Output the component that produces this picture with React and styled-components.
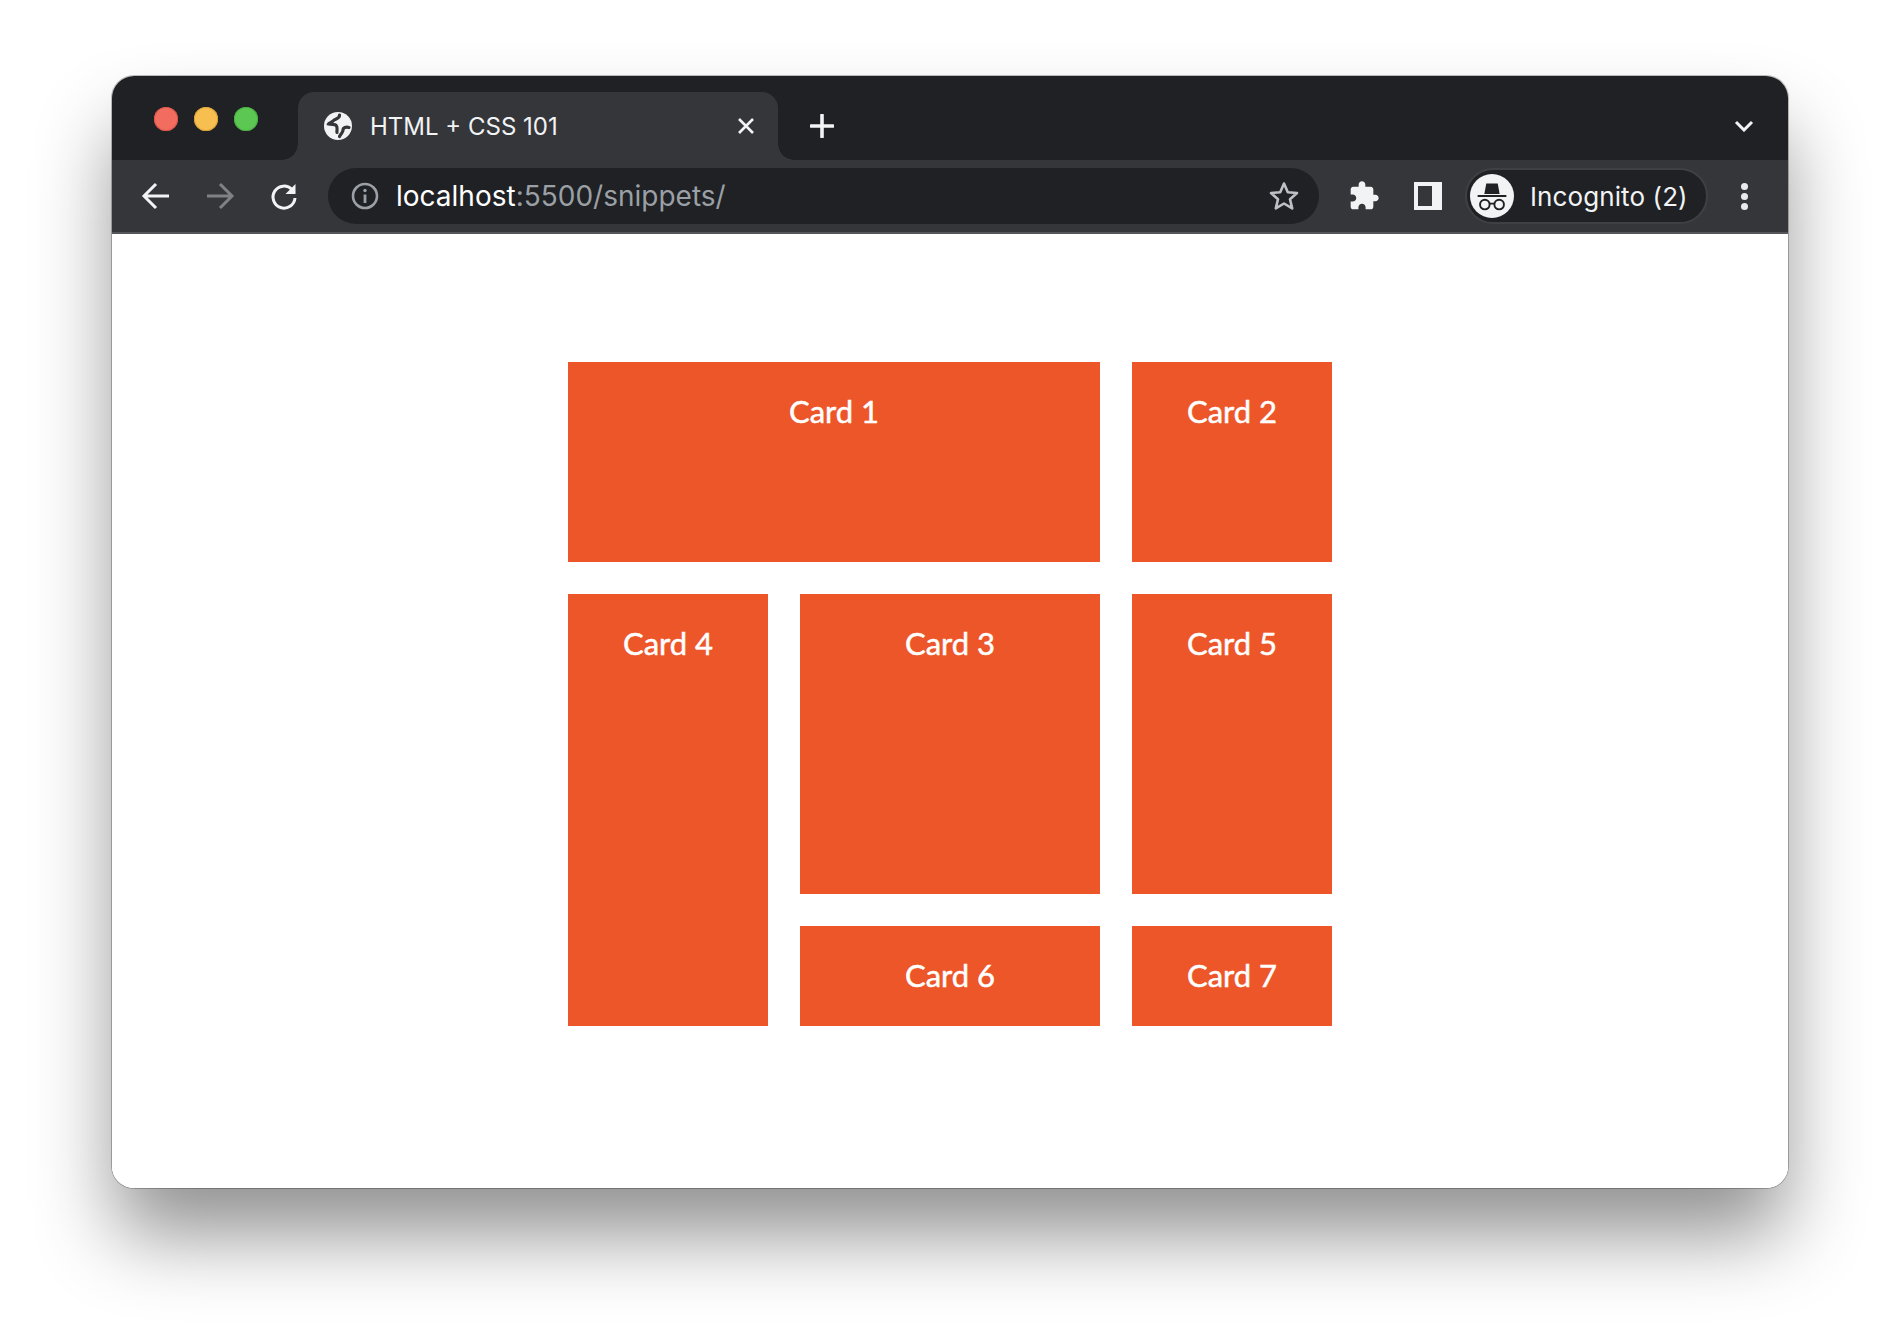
import React from 'react'
import styled, { createGlobalStyle } from 'styled-components'

const GlobalStyle = createGlobalStyle`
  html, body {
    margin: 0;
    padding: 0;
    background: #ffffff;
  }
`

const Page = styled.div`
  width: 1900px;
  height: 1336px;
  padding-top: 76px;
  box-sizing: border-box;
  display: flex;
  justify-content: center;
  align-items: flex-start;
  overflow: hidden;
`

const Window = styled.div`
  width: 1676px;
  height: 1112px;
  border-radius: 22px;
  overflow: hidden;
  display: flex;
  flex-direction: column;
  background: #ffffff;
`

// the shadow has to sit outside the clipped window
const WindowFrame = styled.div`
  border-radius: 22px;
  box-shadow: 0 0 0 1px rgba(0, 0, 0, 0.25), 0 50px 80px -4px rgba(0, 0, 0, 0.44);
`

const TabStrip = styled.div`
  height: 84px;
  flex: none;
  background: #202124;
  display: flex;
  align-items: flex-end;
  padding-left: 42px;
`

const Lights = styled.div`
  display: flex;
  gap: 16px;
  align-self: flex-start;
  margin-top: 31px;
  margin-right: 40px;
`

const Light = styled.span`
  width: 24px;
  height: 24px;
  border-radius: 50%;
  background: ${(p) => p.$color};
  box-shadow: inset 0 0 0 1px ${(p) => p.$edge};
`

const Tab = styled.div`
  position: relative;
  width: 480px;
  height: 68px;
  box-sizing: border-box;
  background: #35363a;
  border-radius: 16px 16px 0 0;
  display: flex;
  align-items: center;
  padding: 0 23px 0 26px;
  color: #f1f3f4;
  font-family: Inter, sans-serif;
  font-size: 24px;

  &::before,
  &::after {
    content: '';
    position: absolute;
    bottom: 0;
    width: 16px;
    height: 16px;
  }
  &::before {
    left: -16px;
    background: radial-gradient(circle at 0 0, transparent 15.5px, #35363a 16px);
  }
  &::after {
    right: -16px;
    background: radial-gradient(circle at 100% 0, transparent 15.5px, #35363a 16px);
  }
`

const TabTitle = styled.span`
  flex: 1;
  margin-left: 18px;
`

const NewTab = styled.svg`
  width: 24px;
  height: 24px;
  margin-left: 32px;
  margin-bottom: 22px;
`

const TabMenu = styled.svg`
  width: 20px;
  height: 12px;
  margin-left: auto;
  margin-right: 34px;
  margin-bottom: 28px;
`

const Toolbar = styled.div`
  height: 74px;
  flex: none;
  box-sizing: border-box;
  background: #35363a;
  border-bottom: 2px solid #55565a;
  display: flex;
  align-items: center;
  padding-left: 28px;
`

const NavIcons = styled.div`
  display: flex;
  gap: 32px;
  margin-right: 28px;
`

const NavIcon = styled.svg`
  width: 32px;
  height: 32px;
  display: block;
`

const Omnibox = styled.div`
  width: 991px;
  height: 56px;
  flex: none;
  box-sizing: border-box;
  border-radius: 28px;
  background: #202124;
  display: flex;
  align-items: center;
  padding: 0 19px 0 23px;
  font-family: Inter, sans-serif;
  font-size: 28px;
  color: #ffffff;
`

const Url = styled.span`
  flex: 1;
  margin-left: 17px;
`

const UrlRest = styled.span`
  color: #9aa0a6;
`

const Extras = styled.div`
  display: flex;
  align-items: center;
  margin-left: 29px;
`

const Puzzle = styled.svg`
  width: 32px;
  height: 32px;
  margin-right: 34px;
`

const SidePanel = styled.div`
  width: 28px;
  height: 28px;
  box-sizing: border-box;
  border: 4px solid #f1f3f4;
  border-right-width: 10px;
  margin-right: 23px;
`

const Profile = styled.div`
  width: 243px;
  height: 56px;
  box-sizing: border-box;
  border-radius: 28px;
  background: #202124;
  border: 2px solid #3f4044;
  display: flex;
  align-items: center;
  padding-left: 3px;
  font-family: Inter, sans-serif;
  font-size: 26px;
  color: #f1f3f4;
`

const Avatar = styled.svg`
  width: 44px;
  height: 44px;
  flex: none;
`

const ProfileName = styled.span`
  margin-left: 16px;
  letter-spacing: 0.1px;
`

const Dots = styled.div`
  display: flex;
  flex-direction: column;
  gap: 3px;
  margin-left: 33px;
`

const Dot = styled.span`
  width: 7px;
  height: 7px;
  border-radius: 50%;
  background: #e8eaed;
`

const Viewport = styled.main`
  flex: 1;
  background: #ffffff;
  padding-top: 128px;
  display: flex;
  justify-content: center;
  align-items: flex-start;
`

const Grid = styled.div`
  display: grid;
  grid-template-columns: 200px 300px 200px;
  grid-template-rows: 200px 300px 100px;
  gap: 32px;
`

const Card = styled.div`
  grid-column: ${(p) => p.$col};
  grid-row: ${(p) => p.$row};
  background: #ed5629;
  color: #ffffff;
  font-family: Lato, sans-serif;
  font-size: 31px;
  -webkit-text-stroke: 0.5px #ffffff;
  text-align: center;
  padding-top: 31px;
  line-height: 36px;
`

const cards = [
  { label: 'Card 1', col: '1 / span 2', row: '1' },
  { label: 'Card 2', col: '3', row: '1' },
  { label: 'Card 4', col: '1', row: '2 / span 2' },
  { label: 'Card 3', col: '2', row: '2' },
  { label: 'Card 5', col: '3', row: '2' },
  { label: 'Card 6', col: '2', row: '3' },
  { label: 'Card 7', col: '3', row: '3' },
]

export default function App() {
  return (
    <>
      <GlobalStyle />
      <Page>
        <WindowFrame>
          <Window>
            <TabStrip>
              <Lights>
                <Light $color="#f26d60" $edge="#d9564a" />
                <Light $color="#f6bf4f" $edge="#dca23a" />
                <Light $color="#5cc853" $edge="#4bad43" />
              </Lights>
              <Tab>
                <svg width="28" height="28" viewBox="0 0 28 28">
                  <circle cx="14" cy="14" r="14" fill="#f1f3f4" />
                  <path d="M15.5 3 C16 7 11 6.5 9 9 C7.5 11 5 10.5 4.5 12 C8 13 11 11.5 12.5 14 C14 16.5 12.5 18 13 20.5" fill="none" stroke="#35363a" strokeWidth="3.2" strokeLinecap="round" />
                  <path d="M25 15.5 C22 14.5 19 15.5 19 18 C19 21 17 21.5 15.5 24.5" fill="none" stroke="#35363a" strokeWidth="3.2" strokeLinecap="round" />
                </svg>
                <TabTitle>HTML + CSS 101</TabTitle>
                <svg width="18" height="18" viewBox="0 0 18 18">
                  <path d="M2 2 L16 16 M16 2 L2 16" stroke="#f1f3f4" strokeWidth="2.6" />
                </svg>
              </Tab>
              <NewTab viewBox="0 0 24 24">
                <path d="M12 1 V23 M1 12 H23" stroke="#f1f3f4" strokeWidth="3.6" strokeLinecap="round" />
              </NewTab>
              <TabMenu viewBox="0 0 20 12">
                <path d="M2 2 L10 10 L18 2" fill="none" stroke="#f1f3f4" strokeWidth="3" />
              </TabMenu>
            </TabStrip>
            <Toolbar>
              <NavIcons>
                <NavIcon viewBox="0 0 32 32">
                  <path d="M29 16 H5 M16 4 L4 16 L16 28" fill="none" stroke="#f1f3f4" strokeWidth="3" />
                </NavIcon>
                <NavIcon viewBox="0 0 32 32">
                  <path d="M3 16 H27 M16 4 L28 16 L16 28" fill="none" stroke="#808184" strokeWidth="3" />
                </NavIcon>
                <NavIcon viewBox="0 0 32 32">
                  <path d="M24 9.5 A11 11 0 1 0 27 18" fill="none" stroke="#f1f3f4" strokeWidth="3" />
                  <path d="M27.5 4 V14 H17.5 Z" fill="#f1f3f4" />
                </NavIcon>
              </NavIcons>
              <Omnibox>
                <svg width="28" height="28" viewBox="0 0 28 28">
                  <circle cx="14" cy="14" r="12" fill="none" stroke="#9aa0a6" strokeWidth="2.6" />
                  <path d="M14 12.5 V21" stroke="#9aa0a6" strokeWidth="2.8" />
                  <circle cx="14" cy="8.5" r="1.7" fill="#9aa0a6" />
                </svg>
                <Url>
                  localhost<UrlRest>:5500/snippets/</UrlRest>
                </Url>
                <svg width="32" height="32" viewBox="0 0 32 32">
                  <path d="M16 3.5 L19.8 12.2 L29 13 L22 19.2 L24.2 28.4 L16 23.5 L7.8 28.4 L10 19.2 L3 13 L12.2 12.2 Z" fill="none" stroke="#bdc1c6" strokeWidth="2.6" strokeLinejoin="round" />
                </svg>
              </Omnibox>
              <Extras>
                <Puzzle viewBox="0 0 24 24">
                  <path d="M20.5 11H19V7c0-1.1-.9-2-2-2h-4V3.5C13 2.12 11.88 1 10.5 1S8 2.12 8 3.5V5H4c-1.1 0-1.99.9-1.99 2v3.8H3.5c1.49 0 2.7 1.21 2.7 2.7s-1.21 2.7-2.7 2.7H2V20c0 1.1.9 2 2 2h3.8v-1.5c0-1.49 1.21-2.7 2.7-2.7 1.49 0 2.7 1.21 2.7 2.7V22H17c1.1 0 2-.9 2-2v-4h1.5c1.38 0 2.5-1.12 2.5-2.5S21.88 11 20.5 11z" fill="#f1f3f4" />
                </Puzzle>
                <SidePanel />
                <Profile>
                  <Avatar viewBox="0 0 46 46">
                    <circle cx="23" cy="23" r="23" fill="#f1f3f4" />
                    <path d="M15 21 L17 10 H29 L31 21 Z" fill="#202124" />
                    <path d="M8 23 H38" stroke="#202124" strokeWidth="2" />
                    <circle cx="15.5" cy="32" r="5" fill="none" stroke="#202124" strokeWidth="2" />
                    <circle cx="30.5" cy="32" r="5" fill="none" stroke="#202124" strokeWidth="2" />
                    <path d="M20 31 H26" stroke="#202124" strokeWidth="2" />
                  </Avatar>
                  <ProfileName>Incognito (2)</ProfileName>
                </Profile>
                <Dots>
                  <Dot />
                  <Dot />
                  <Dot />
                </Dots>
              </Extras>
            </Toolbar>
            <Viewport>
              <Grid>
                {cards.map((card) => (
                  <Card key={card.label} $col={card.col} $row={card.row}>
                    {card.label}
                  </Card>
                ))}
              </Grid>
            </Viewport>
          </Window>
        </WindowFrame>
      </Page>
    </>
  )
}
